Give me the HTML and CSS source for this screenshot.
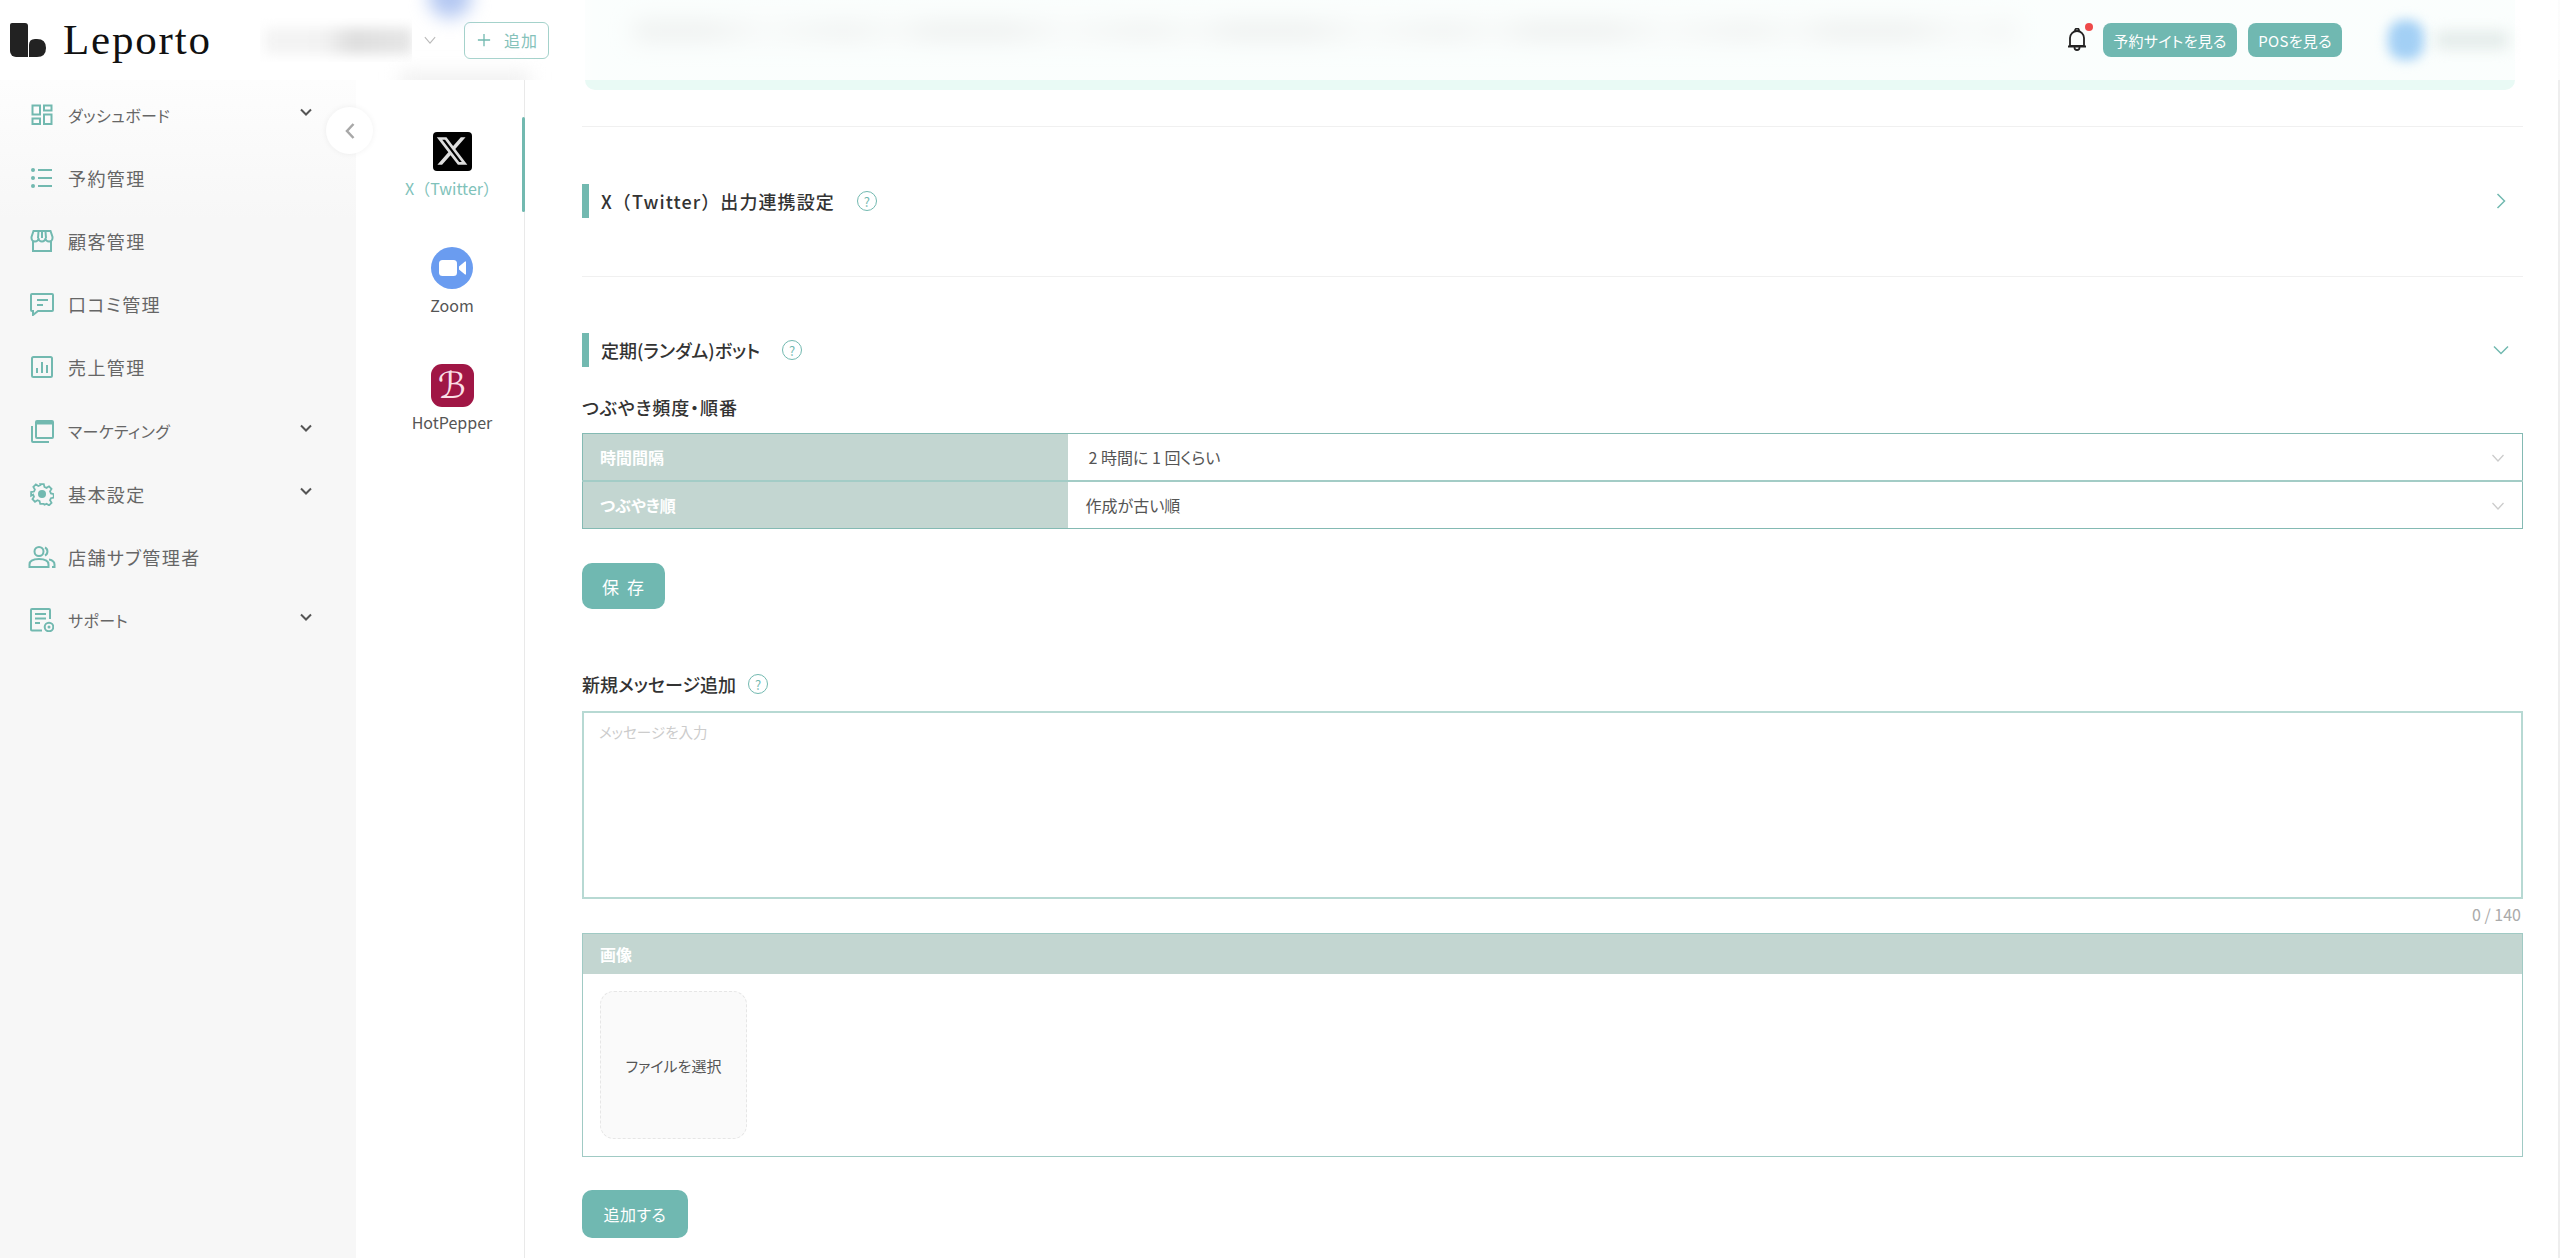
FILE: index.html
```html
<!DOCTYPE html>
<html lang="ja">
<head>
  <meta charset="UTF-8" />
  <meta name="viewport" content="width=device-width, initial-scale=1.0" />
  <title>Leporto</title>
  <link rel="stylesheet" href="styles.css">
</head>
<body>
  <header class="topbar">
    <div class="blob blob-blue"></div>
    <div class="blob blob-grey"></div>
    <div class="brand">
      <svg class="brand-mark" viewBox="0 0 36 34"><path d="M2 0h13a3 3 0 0 1 3 3v31H6a6 6 0 0 1-6-6V2a2 2 0 0 1 2-2z"/><path d="M19 34V22q0-6 6-6h2q9 0 9 9 0 9-9 9z"/></svg>
      <span class="brand-name">Leporto</span>
    </div>
    <div class="store-name"><div class="store-name-inner"></div></div>
    <svg class="store-caret" viewBox="0 0 14 10"><path d="M1 1l6 7 6-7"/></svg>
    <button class="add-store"><svg viewBox="0 0 16 16"><path d="M8 1v14M1 8h14"/></svg>追加</button>
    <div class="topbar-right">
      <div class="bell">
        <svg viewBox="0 0 20 24"><path d="M3 18V10a7 7 0 0 1 14 0v8zM1 18.500h18M8 2.500a2 2 0 0 1 4 0M7.500 19.500a2.500 2.500 0 0 0 5 0"/></svg>
        <span class="bell-dot"></span>
      </div>
      <a class="top-btn top-btn-site">予約サイトを見る</a>
      <a class="top-btn top-btn-pos">POSを見る</a>
      <div class="avatar"></div>
      <div class="user-name"></div>
    </div>
  </header>

  <div class="app">
    <aside class="sidebar">
      <ul class="nav">
        <li class="nav-item">
          <svg class="nav-icon" viewBox="0 0 24 24"><path d="M2.500 2.500h7.500v9H2.500zM14 2.500h7.500v5H14zM14 11.500h7.500v9.500H14zM2.500 15.500h7.500v5.500H2.500z"/></svg>
          <span class="nav-label small">ダッシュボード</span>
          <svg class="nav-caret" viewBox="0 0 12 8"><path d="M1 1.500l5 5 5-5"/></svg>
        </li>
        <li class="nav-item">
          <svg class="nav-icon" viewBox="0 0 24 24"><path d="M8 4h14M8 12h14M8 20h14"/><circle class="fill" cx="3" cy="4" r="2"/><circle class="fill" cx="3" cy="12" r="2"/><circle class="fill" cx="3" cy="20" r="2"/></svg>
          <span class="nav-label">予約管理</span>
        </li>
        <li class="nav-item">
          <svg class="nav-icon" viewBox="0 0 24 24"><path d="M3 12v10h18V12M1.500 8l2-6h17l2 6v1a3.500 3.500 0 0 1-7 0 3.500 3.500 0 0 1-7 0 3.500 3.500 0 0 1-7 0zM8.500 2.500L8 9M15.500 2.500L16 9M12 2.500V9"/></svg>
          <span class="nav-label">顧客管理</span>
        </li>
        <li class="nav-item">
          <svg class="nav-icon" viewBox="0 0 24 24"><path d="M3 2h19a1 1 0 0 1 1 1v15a1 1 0 0 1-1 1H8l-5 4v-4H2a1 1 0 0 1-1-1V3a1 1 0 0 1 1-1zM7 8h11M7 13h6"/></svg>
          <span class="nav-label">口コミ管理</span>
        </li>
        <li class="nav-item">
          <svg class="nav-icon" viewBox="0 0 24 24"><rect x="2" y="2" width="20" height="20" rx="1.500"/><path d="M7 18v-5M12 18V7M17 18v-8"/></svg>
          <span class="nav-label">売上管理</span>
        </li>
        <li class="nav-item">
          <svg class="nav-icon" viewBox="0 0 24 24"><path d="M2 7v15a1 1 0 0 0 1 1h16"/><rect x="6" y="2" width="17" height="17" rx="1"/><path class="thick" d="M6 4h17"/></svg>
          <span class="nav-label small">マーケティング</span>
          <svg class="nav-caret" viewBox="0 0 12 8"><path d="M1 1.500l5 5 5-5"/></svg>
        </li>
        <li class="nav-item">
          <svg class="nav-icon" viewBox="0 0 24 24"><path d="M10 1h4l.7 3.200 2.300 1 2.800-1.700 2.800 2.800-1.700 2.800 1 2.300 3.100.6v4l-3.100.7-1 2.300 1.700 2.800-2.800 2.800-2.800-1.700-2.300 1L14 23h-4l-.7-3.100-2.300-1-2.800 1.700-2.800-2.800 1.700-2.800-1-2.300L-.1 13.900v-4l3.200-.6 1-2.300-1.700-2.800 2.800-2.800 2.800 1.700 2.300-1z" transform="translate(1.200 1.200) scale(.9)"/><circle class="fill" cx="12" cy="12" r="4"/></svg>
          <span class="nav-label">基本設定</span>
          <svg class="nav-caret" viewBox="0 0 12 8"><path d="M1 1.500l5 5 5-5"/></svg>
        </li>
        <li class="nav-item">
          <svg class="nav-icon nav-icon-wide" viewBox="0 0 28 24"><circle cx="11" cy="6.500" r="4.500"/><path d="M1.500 22v-2.500C1.500 16 5 14 11 14s9.500 2 9.500 5.500V22zM17 2.500a4.500 4.500 0 0 1 0 8M21 14.500c3.500.7 5.500 2.500 5.500 5V22H24"/></svg>
          <span class="nav-label">店舗サブ管理者</span>
        </li>
        <li class="nav-item">
          <svg class="nav-icon" viewBox="0 0 24 24"><path d="M12 22.500H2a1 1 0 0 1-1-1V2a1 1 0 0 1 1-1h17a1 1 0 0 1 1 1v9M5 6h11M5 10.500h11M5 15h5"/><circle cx="19" cy="19" r="4.300"/><circle class="fill" cx="19" cy="19" r="1.500"/></svg>
          <span class="nav-label small">サポート</span>
          <svg class="nav-caret" viewBox="0 0 12 8"><path d="M1 1.500l5 5 5-5"/></svg>
        </li>
      </ul>
      <button class="collapse"><svg viewBox="0 0 10 18"><path d="M8.500 2L2 9l6.500 7"/></svg></button>
    </aside>

    <nav class="services">
      <div class="service active">
        <div class="service-icon">
          <div class="logo-x"><svg viewBox="0 0 24 24"><path d="M18.244 2.250h3.308l-7.227 8.260 8.502 11.240H16.170l-5.214-6.817L4.990 21.750H1.680l7.730-8.835L1.254 2.250H8.080l4.713 6.231zm-1.161 17.520h1.833L7.084 4.126H5.117z"/></svg></div>
        </div>
        <span class="full-width">X（Twitter）</span>
      </div>
      <div class="service">
        <div class="service-icon">
          <svg class="logo-zoom" viewBox="0 0 42 42"><circle cx="21" cy="21" r="21"/><rect class="cam" x="8" y="13" width="18" height="16" rx="3.500"/><path class="cam" d="M28 19.500l6-5a.6.6 0 0 1 1 .5v12a.6.6 0 0 1-1 .5l-6-5z"/></svg>
        </div>
        <span>Zoom</span>
      </div>
      <div class="service">
        <div class="service-icon">
          <div class="logo-hp">ℬ</div>
        </div>
        <span>HotPepper</span>
      </div>
    </nav>

    <main class="content">
      <div class="notice"><div class="notice-text"></div></div>

      <section class="section">
        <div class="section-head">
          <h2 class="full-width heading-wide">X（Twitter）出力連携設定</h2>
          <span class="help">?</span>
          <svg class="section-caret" viewBox="0 0 16 16"><path d="M4.500 1l7 7-7 7"/></svg>
        </div>
      </section>

      <section class="section section-open">
        <div class="section-head">
          <h2>定期(ランダム)ボット</h2>
          <span class="help">?</span>
          <svg class="section-caret" viewBox="0 0 16 16"><path d="M1 4.500l7 7 7-7"/></svg>
        </div>

        <h3 class="sub-head sub-head-first">つぶやき頻度・順番</h3>
        <table class="form-table">
          <tr>
            <th>時間間隔</th>
            <td>
              <span class="select-value first">2 時間に 1 回くらい</span>
              <svg class="select-caret" viewBox="0 0 12 8"><path d="M.5 1l5.500 6 5.500-6"/></svg>
            </td>
          </tr>
          <tr>
            <th>つぶやき順</th>
            <td>
              <span class="select-value">作成が古い順</span>
              <svg class="select-caret" viewBox="0 0 12 8"><path d="M.5 1l5.500 6 5.500-6"/></svg>
            </td>
          </tr>
        </table>
        <button class="btn btn-save">保 存</button>

        <h3 class="sub-head sub-head-new">新規メッセージ追加 <span class="help">?</span></h3>
        <textarea class="message" placeholder="メッセージを入力"></textarea>
        <div class="counter">0 / 140</div>

        <div class="image-panel">
          <div class="image-panel-head">画像</div>
          <div class="image-panel-body">
            <div class="file-box">ファイルを選択</div>
          </div>
        </div>
        <button class="btn btn-add">追加する</button>
      </section>
    </main>
  </div>
</body>
</html>
```

FILE: styles.css
```css
* {
  box-sizing: border-box;
}
html, body {
  height: 100%;
}
body {
  margin: 0;
  background: #fff;
  color: #333;
  font-family: "Noto Sans CJK JP", "Noto Sans", sans-serif;
  font-feature-settings: "palt";
  overflow: hidden;
}
h2, h3 {
  margin: 0;
}
button {
  font-family: inherit;
  font-feature-settings: inherit;
}
.full-width {
  font-feature-settings: normal;
}

/* top bar */
.topbar {
  position: absolute;
  top: 0;
  left: 0;
  right: 0;
  height: 80px;
  display: flex;
  align-items: center;
  z-index: 5;
  overflow: hidden;
  background: linear-gradient(90deg, #fff 0, #fff 560px, rgba(255, 255, 255, .8) 600px);
}
.blob {
  position: absolute;
  filter: blur(9px);
}
.blob-blue {
  left: 428px;
  top: -24px;
  width: 44px;
  height: 42px;
  border-radius: 50%;
  background: #b4c8f2;
}
.blob-grey {
  left: 400px;
  top: 72px;
  width: 130px;
  height: 20px;
  background: #f0f0f0;
}
.brand {
  display: flex;
  align-items: center;
  margin-left: 10px;
  width: 250px;
  flex-shrink: 0;
}
.brand-mark {
  width: 36px;
  height: 34px;
  fill: #222;
}
.brand-name {
  margin-left: 17px;
  font-family: "Liberation Serif", serif;
  font-size: 43px;
  line-height: 44px;
  letter-spacing: 1.800px;
  color: #111;
  font-feature-settings: normal;
}
.store-name {
  width: 152px;
  height: 44px;
  overflow: hidden;
  flex-shrink: 0;
}
.store-name-inner {
  height: 26px;
  margin: 10px 0 0 4px;
  background: linear-gradient(90deg, #f4f4f4 0, #f2f2f2 40%, #dedede 60%, #e4e4e4 90%);
  filter: blur(6px);
}
.store-caret {
  width: 12px;
  height: 9px;
  margin-left: 12px;
  fill: none;
  stroke: #bbb;
  stroke-width: 1.300;
  flex-shrink: 0;
}
.add-store {
  display: flex;
  align-items: center;
  width: 85px;
  height: 37px;
  margin-left: 28px;
  padding: 0 0 0 12px;
  background: #fff;
  border: 1px solid #a4d2cb;
  border-radius: 6px;
  color: #85c2ba;
  font-size: 16px;
  letter-spacing: 1px;
  flex-shrink: 0;
}
.add-store svg {
  width: 14px;
  height: 14px;
  margin-right: 13px;
  fill: none;
  stroke: #72b9b0;
  stroke-width: 1.500;
}
.topbar-right {
  display: flex;
  align-items: center;
  margin-left: auto;
  padding-right: 52px;
}
.bell {
  position: relative;
  width: 20px;
  height: 24px;
  margin-right: 16px;
}
.bell svg {
  display: block;
  width: 20px;
  height: 24px;
  fill: none;
  stroke: #222;
  stroke-width: 1.800;
}
.bell-dot {
  position: absolute;
  top: -5px;
  right: -6px;
  width: 8px;
  height: 8px;
  background: #ee4a4a;
  border-radius: 50%;
}
.top-btn {
  display: flex;
  align-items: center;
  justify-content: center;
  height: 34px;
  background: #70b8b1;
  border-radius: 8px;
  color: #fff;
  font-size: 15px;
  letter-spacing: .3px;
}
.top-btn-site {
  width: 134px;
  margin-right: 11px;
}
.top-btn-pos {
  width: 94px;
}
.avatar {
  width: 36px;
  height: 40px;
  margin-left: 46px;
  background: #a3d0f5;
  border-radius: 40%;
  filter: blur(6px);
}
.user-name {
  width: 72px;
  height: 18px;
  margin-left: 12px;
  background: #e4ecea;
  filter: blur(7px);
}

/* page */
.app {
  display: grid;
  grid-template-columns: 356px 169px 1fr;
  height: 100%;
}

/* sidebar */
.sidebar {
  position: relative;
  padding-top: 83px;
  background: linear-gradient(180deg, #fdfdfd 80px, #f7f7f7 220px);
}
.nav {
  list-style: none;
  margin: 0;
  padding: 0;
}
.nav-item {
  display: flex;
  align-items: center;
  height: 63.200px;
  padding: 0 44px 0 30px;
  color: #666;
  font-size: 18px;
  letter-spacing: 1.400px;
}
.nav-icon {
  width: 24px;
  height: 24px;
  margin-right: 14px;
  flex-shrink: 0;
  fill: none;
  stroke: #72b9b0;
  stroke-width: 2;
}
.nav-icon-wide {
  width: 28px;
  margin-left: -2px;
  margin-right: 12px;
}
.nav-icon .fill {
  fill: #72b9b0;
  stroke: none;
}
.nav-icon .thick {
  stroke-width: 3;
}
.nav-label.small {
  font-size: 16px;
  letter-spacing: .4px;
}
.nav-caret {
  width: 12px;
  height: 8px;
  margin-left: auto;
  margin-top: -6px;
  fill: none;
  stroke: #555;
  stroke-width: 2;
}
.collapse {
  position: absolute;
  top: 107px;
  left: 326px;
  width: 47px;
  height: 47px;
  padding: 0;
  display: flex;
  align-items: center;
  justify-content: center;
  background: #fff;
  border: 0;
  border-radius: 50%;
  box-shadow: 0 0 6px rgba(0, 0, 0, .06);
  z-index: 2;
}
.collapse svg {
  width: 10px;
  height: 18px;
  fill: none;
  stroke: #a8a8a8;
  stroke-width: 2.500;
}

/* service tabs */
.services {
  display: flex;
  flex-direction: column;
  gap: 22px;
  padding: 117px 0 0 24px;
  border-right: 1px solid #e9e9e9;
  color: #555;
  font-size: 16px;
}
.service {
  position: relative;
  height: 95px;
  padding-top: 13px;
  text-align: center;
}
.service span {
  display: block;
  margin-top: 4px;
  line-height: 24px;
  white-space: nowrap;
}
.service.active {
  color: #80c2ba;
}
.service.active::after {
  content: "";
  position: absolute;
  top: 0;
  right: -1px;
  width: 3px;
  height: 95px;
  background: #72b9b0;
  border-radius: 2px;
}
.service-icon {
  display: flex;
  align-items: center;
  justify-content: center;
  height: 42px;
}
.logo-x {
  display: flex;
  align-items: center;
  justify-content: center;
  width: 39px;
  height: 39px;
  background: #000;
  border-radius: 4px;
}
.logo-x svg {
  width: 34px;
  height: 34px;
  fill: #ddd;
}
.logo-zoom {
  width: 42px;
  height: 42px;
  fill: #6a9cf0;
}
.logo-zoom .cam {
  fill: #fff;
}
.logo-hp {
  width: 43px;
  height: 43px;
  background: #a01645;
  border-radius: 11px;
  color: #fbdfe6;
  font-family: "DejaVu Sans", serif;
  font-size: 36px;
  line-height: 43px;
}

/* main column */
.content {
  padding: 0 35px 0 57px;
  border-right: 2px solid #eee;
  min-width: 0;
}
.notice {
  height: 90px;
  margin: 0 8px 0 3px;
  padding: 22px 500px 0 50px;
  background: #e9faf5;
  border-radius: 0 0 10px 10px;
}
.notice-text {
  height: 18px;
  background: repeating-linear-gradient(90deg, #a8b2ae 0, #a8b2ae 70px, #dbe5e1 130px, #b4beba 210px, #d6e0dc 260px, #a8b2ae 300px);
  filter: blur(11px);
}
.section {
  height: 150px;
  padding-top: 57px;
  margin-top: 36px;
  border-top: 1px solid #f0f0f0;
}
.section + .section {
  margin-top: 0;
}
.section-open {
  height: auto;
  padding-top: 56px;
}
.section-head {
  display: flex;
  align-items: center;
  height: 34px;
  padding-left: 12px;
  border-left: 7px solid #72b9b0;
}
.section-head h2 {
  font-size: 18px;
  font-weight: 500;
  line-height: 34px;
  color: #333;
}
.section-head .heading-wide {
  letter-spacing: 1.100px;
}
.help {
  display: inline-flex;
  align-items: center;
  justify-content: center;
  width: 20px;
  height: 20px;
  margin-left: 22px;
  border: 1.500px solid #72b9b0;
  border-radius: 50%;
  color: #72b9b0;
  font-size: 13px;
  font-weight: 400;
  line-height: 1;
}
.section-caret {
  width: 16px;
  height: 16px;
  margin-left: auto;
  margin-right: 14px;
  fill: none;
  stroke: #72b9b0;
  stroke-width: 1.500;
}
.sub-head {
  margin-top: 27px;
  font-size: 18px;
  font-weight: 500;
  line-height: 26px;
}
.sub-head-first {
  letter-spacing: .9px;
}
.sub-head-new {
  display: flex;
  align-items: center;
  margin-top: 62px;
}
.sub-head-new .help {
  margin-left: 12px;
}
.form-table {
  width: 100%;
  margin-top: 13px;
  border-collapse: collapse;
  border: 1px solid #84bab3;
  font-size: 16px;
}
.form-table tr + tr {
  border-top: 2px solid #a3ccc6;
}
.form-table th {
  width: 485px;
  height: 47px;
  padding: 0 0 0 17px;
  background: #c3d6d1;
  color: #fff;
  font-weight: 700;
  text-align: left;
}
.form-table tr + tr th {
  height: 48px;
}
.form-table td {
  position: relative;
  padding: 0 0 0 18px;
  color: #555;
}
.select-value.first {
  padding-left: 3px;
}
.select-caret {
  position: absolute;
  top: 20px;
  right: 18px;
  width: 12px;
  height: 8px;
  fill: none;
  stroke: #ccc;
  stroke-width: 1.300;
}
.btn {
  display: block;
  height: 46px;
  background: #70b8b1;
  border: 0;
  border-radius: 10px;
  color: #fff;
  font-size: 16px;
}
.btn-save {
  width: 83px;
  margin-top: 34px;
  padding: 0 0 0 2px;
  font-size: 17px;
  letter-spacing: 3px;
  word-spacing: -2px;
}
.btn-add {
  width: 106px;
  height: 48px;
  margin-top: 33px;
  letter-spacing: .500px;
}
.message {
  display: block;
  width: 100%;
  height: 188px;
  margin-top: 14px;
  padding: 8px 15px;
  border: 2px solid #b7d9d3;
  border-radius: 0;
  outline: 0;
  resize: none;
  font-family: inherit;
  font-feature-settings: inherit;
  font-size: 14.500px;
}
.message::placeholder {
  color: #ccc;
}
.counter {
  margin-top: 4px;
  padding-right: 2px;
  color: #aaa;
  font-size: 16px;
  line-height: 22px;
  text-align: right;
}
.image-panel {
  margin-top: 8px;
  border: 1px solid #a0cac4;
}
.image-panel-head {
  height: 40px;
  padding-left: 17px;
  background: #c3d6d1;
  color: #fff;
  font-size: 16px;
  font-weight: 700;
  line-height: 40px;
}
.image-panel-body {
  padding: 17px;
}
.file-box {
  display: flex;
  align-items: center;
  justify-content: center;
  width: 147px;
  height: 148px;
  background: #fafafa;
  border: 1px dashed #e6e6e6;
  border-radius: 14px;
  color: #555;
  font-size: 15px;
}
```
